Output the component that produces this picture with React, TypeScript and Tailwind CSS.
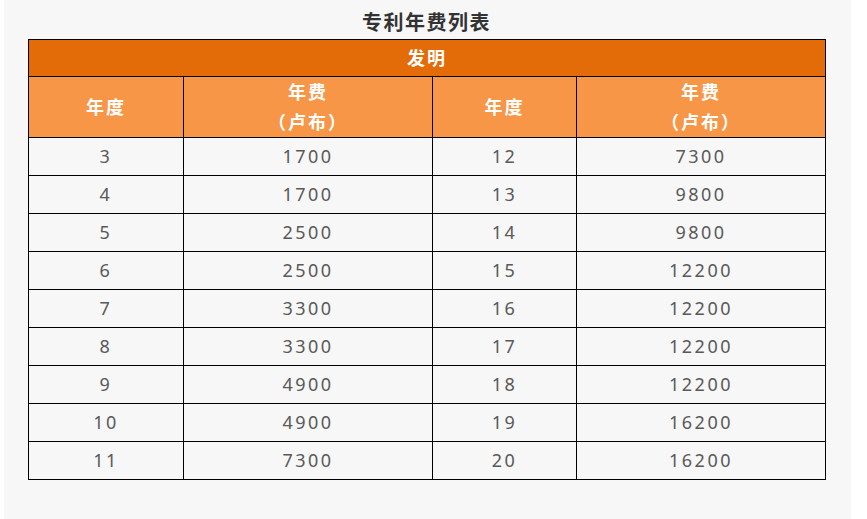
const rows: [string, string, string, string][] = [
    ['3', '1700', '12', '7300'],
    ['4', '1700', '13', '9800'],
    ['5', '2500', '14', '9800'],
    ['6', '2500', '15', '12200'],
    ['7', '3300', '16', '12200'],
    ['8', '3300', '17', '12200'],
    ['9', '4900', '18', '12200'],
    ['10', '4900', '19', '16200'],
    ['11', '7300', '20', '16200'],
];

function FeeHead() {
    return (
        <th className="border border-black p-0 text-center font-bold">
            <div className="leading-[30px]">年费</div>
            <div className="leading-[30px]">（卢布）</div>
        </th>
    );
}

export default function App() {
    return (
        <div className="h-[519px] w-[867px] bg-white font-['Noto_Sans','Noto_Sans_CJK_SC',sans-serif]">
            <div className="ml-[4px] h-[519px] w-[847px] bg-[#f7f7f7] pl-[24px] pr-[26px] pt-[7px]">
                <h1 className="h-[32px] text-center text-[20px] leading-[32px] font-bold tracking-[1.5px] text-[#333]">
                    专利年费列表
                </h1>
                <table className="w-[797px] table-fixed border-collapse border border-black">
                    <colgroup>
                        <col className="w-[155px]" />
                        <col className="w-[249px]" />
                        <col className="w-[144px]" />
                        <col className="w-[249px]" />
                    </colgroup>
                    <thead className="text-[18px] tracking-[2px] text-white">
                        <tr className="h-[37px] bg-[#e36c09]">
                            <th colSpan={4} className="border border-black p-0 text-center font-bold">
                                发明
                            </th>
                        </tr>
                        <tr className="h-[60px] bg-[#f79646]">
                            <th className="border border-black p-0 text-center font-bold">年度</th>
                            <FeeHead />
                            <th className="border border-black p-0 text-center font-bold">年度</th>
                            <FeeHead />
                        </tr>
                    </thead>
                    <tbody className="text-[18px] tracking-[2.5px] text-[#595959]">
                        {rows.map((r) => (
                            <tr key={r[0]} className="h-[38px]">
                                {r.map((v, i) => (
                                    <td key={i} className="border border-black p-0 text-center">
                                        {v}
                                    </td>
                                ))}
                            </tr>
                        ))}
                    </tbody>
                </table>
            </div>
        </div>
    );
}
